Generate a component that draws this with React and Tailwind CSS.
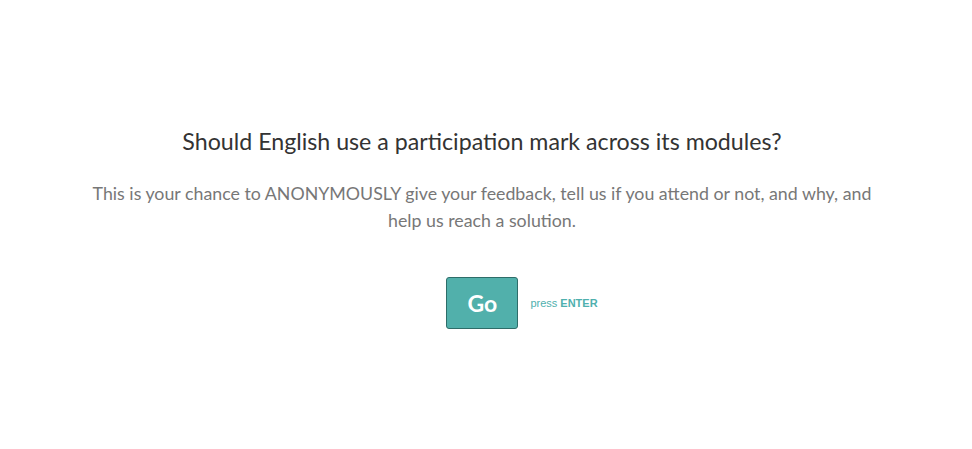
export default function App() {
  return (
    <div
      className="min-h-[449px] w-full bg-white flex flex-col items-center"
      style={{ fontFamily: '"Source Sans Pro", Lato, "Noto Sans", sans-serif' }}
    >
      {/* Question */}
      <div className="mt-[126px] mr-[8px] w-[800px] text-center">
        <h1 className="text-[23.2px] leading-[30px] text-[#333333]">
          Should English use a participation mark across its modules?
        </h1>
        <p className="mt-[24px] text-[17.8px] leading-[27px] text-[#777777]">
          This is your chance to ANONYMOUSLY give your feedback, tell us if you attend or not, and why, and help us reach a solution.
        </p>
      </div>

      {/* Go button + hint */}
      <div className="mt-[43px] flex items-center pl-[72px]">
        <button className="w-[72px] h-[52px] rounded-[3px] bg-[#51b0ab] border border-[#2e6d69] text-white text-[23px] font-bold">
          Go
        </button>
        <span
          className="ml-[12px] text-[11px] text-[#4fb0ae]"
          style={{ fontFamily: '"Liberation Sans", Arial, sans-serif' }}
        >
          press <span className="font-bold">ENTER</span>
        </span>
      </div>
    </div>
  )
}
